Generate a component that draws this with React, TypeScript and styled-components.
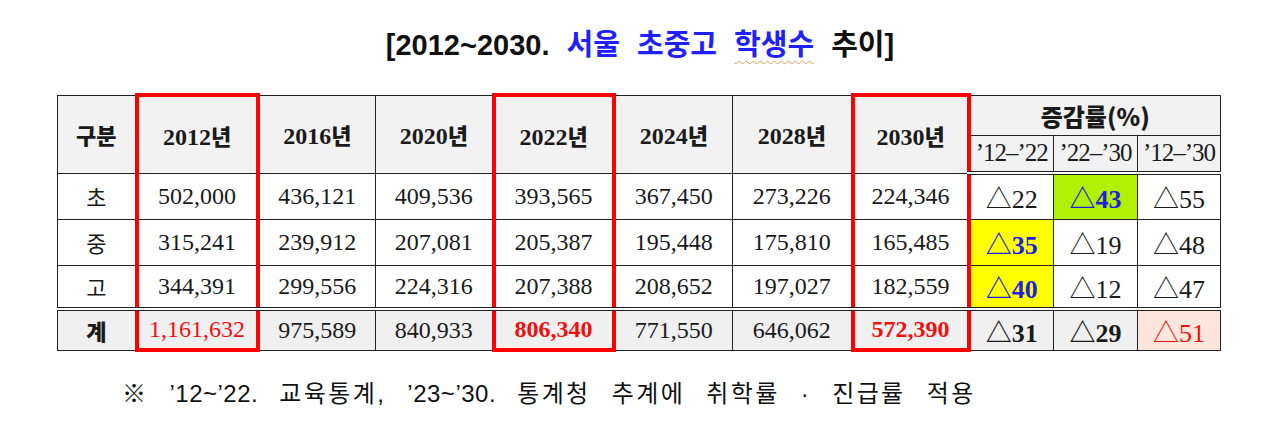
import React from "react";
import styled, { createGlobalStyle, css } from "styled-components";

const Global = createGlobalStyle`
  html, body { margin: 0; padding: 0; background: #fff; }
  body { width: 1280px; height: 433px; overflow: hidden; }
`;

const Page = styled.div`
  width: 1280px;
  display: flex;
  flex-direction: column;
  align-items: flex-start;
`;

const Title = styled.h1`
  margin: 28px 0 0 0;
  align-self: center;
  font: bold 29px/34px "Liberation Sans", "Noto Sans CJK KR", sans-serif;
  color: #111;
  letter-spacing: 0px;
  word-spacing: 9px;
`;

const Blue = styled.span`
  color: #1f1fff;
`;

const Wavy = styled.span`
  text-decoration: underline wavy #e0a050;
  text-decoration-thickness: 1px;
  text-underline-offset: 5px;
`;

const Table = styled.table`
  margin: 31px 0 0 57px;
  width: 1163px;
  border-collapse: collapse;
  table-layout: fixed;
  font-family: "Liberation Serif", "Noto Sans CJK KR", serif;
  color: #1a1a1a;
`;

type CellProps = {
  $bg?: string;
  $red?: boolean;
  $top?: boolean;
  $bottom?: boolean;
  $color?: string;
  $bold?: boolean;
  $size?: number;
};

const Cell = styled.td<CellProps>`
  border: 1.5px solid #222;
  text-align: center;
  padding: 0;
  font-size: ${(p) => p.$size ?? 24}px;
  font-weight: ${(p) => (p.$bold ? "bold" : "normal")};
  color: ${(p) => p.$color ?? "#1a1a1a"};
  background: ${(p) => p.$bg ?? "#fff"};
  white-space: nowrap;
  overflow: hidden;
  ${(p) =>
    p.$red &&
    css`
      border-left: 4px solid #f00;
      border-right: 4px solid #f00;
    `}
  ${(p) =>
    p.$top &&
    css`
      border-top: 4px solid #f00;
    `}
  ${(p) =>
    p.$bottom &&
    css`
      border-bottom: 4px solid #f00;
    `}
`;

const HeadRow = styled.tr<{ $h: number }>`
  height: ${(p) => p.$h}px;
`;

const HeadBottom = styled.tr<{ $h: number }>`
  height: ${(p) => p.$h}px;
  & > td {
    border-bottom: 4px double #222;
  }
`;

const BodyRow = styled.tr<{ $h: number }>`
  height: ${(p) => p.$h}px;
`;

const TotalRow = styled.tr`
  height: 41px;
  & > td {
    border-top: 4px double #222;
  }
`;

const Label = styled.span<{ $bold?: boolean; $size?: number }>`
  font-family: "Noto Sans CJK KR", sans-serif;
  font-weight: ${(p) => (p.$bold ? 900 : 400)};
  font-size: ${(p) => p.$size ?? 22}px;
`;

const Sub = styled.span`
  font-family: "Liberation Serif", "Noto Sans CJK KR", serif;
  font-size: 25px;
  letter-spacing: -1px;
`;

const Note = styled.p`
  margin: 27px 0 0 122px;
  font: 24px/30px "Liberation Sans", "Noto Sans CJK KR", sans-serif;
  color: #111;
  word-spacing: 12px;
  letter-spacing: 2.4px;
`;

const Digits = styled.span`
  letter-spacing: 0.5px;
`;

const HEAD_BG = "#f2f2f2";
const TOTAL_BG = "#f0f0f0";
const DELTA_SIZE = 26;
const years = ["2012", "2016", "2020", "2022", "2024", "2028", "2030"];
const redCols = new Set([0, 3, 6]);
const widths = [79, 121, 118, 118, 120, 119, 120, 116, 85, 84, 83];

type Delta = { v: string; bg?: string; color?: string; bold?: boolean };

const rows: { label: string; nums: string[]; deltas: Delta[] }[] = [
  {
    label: "초",
    nums: ["502,000", "436,121", "409,536", "393,565", "367,450", "273,226", "224,346"],
    deltas: [{ v: "22" }, { v: "43", bg: "#b0f000", color: "#1f1fe0", bold: true }, { v: "55" }],
  },
  {
    label: "중",
    nums: ["315,241", "239,912", "207,081", "205,387", "195,448", "175,810", "165,485"],
    deltas: [{ v: "35", bg: "#ffff00", color: "#1f1fe0", bold: true }, { v: "19" }, { v: "48" }],
  },
  {
    label: "고",
    nums: ["344,391", "299,556", "224,316", "207,388", "208,652", "197,027", "182,559"],
    deltas: [{ v: "40", bg: "#ffff00", color: "#1f1fe0", bold: true }, { v: "12" }, { v: "47" }],
  },
];

const totals = ["1,161,632", "975,589", "840,933", "806,340", "771,550", "646,062", "572,390"];
const totalDeltas: Delta[] = [
  { v: "31", bold: true, bg: TOTAL_BG },
  { v: "29", bold: true, bg: TOTAL_BG },
  { v: "51", bg: "#fde6dc", color: "#f01010" },
];

export default function App() {
  return (
    <>
      <Global />
      <Page>
        <Title>
          [2012~2030. <Blue>서울 초중고 <Wavy>학생수</Wavy></Blue> 추이]
        </Title>
        <Table>
          <colgroup>
            {widths.map((w, i) => (
              <col key={i} style={{ width: w }} />
            ))}
          </colgroup>
          <tbody>
            <HeadRow $h={40}>
              <Cell rowSpan={2} $bg={HEAD_BG}>
                <Label $bold>구분</Label>
              </Cell>
              {years.map((y, i) => (
                <Cell key={y} rowSpan={2} $bg={HEAD_BG} $bold $red={redCols.has(i)} $top={redCols.has(i)}>
                  {y}
                  <Label $bold>년</Label>
                </Cell>
              ))}
              <Cell colSpan={3} $bg={HEAD_BG}>
                <Label $bold $size={24}>증감률(%)</Label>
              </Cell>
            </HeadRow>
            <HeadBottom $h={38}>
              <Cell $bg={HEAD_BG}>
                <Sub>’12–’22</Sub>
              </Cell>
              <Cell $bg={HEAD_BG}>
                <Sub>’22–’30</Sub>
              </Cell>
              <Cell $bg={HEAD_BG}>
                <Sub>’12–’30</Sub>
              </Cell>
            </HeadBottom>
            {rows.map((r, ri) => (
              <BodyRow key={r.label} $h={ri === 2 ? 44 : 46}>
                <Cell>
                  <Label>{r.label}</Label>
                </Cell>
                {r.nums.map((n, i) => (
                  <Cell key={i} $red={redCols.has(i)}>
                    {n}
                  </Cell>
                ))}
                {r.deltas.map((d, i) => (
                  <Cell key={"d" + i} $bg={d.bg} $color={d.color} $bold={d.bold} $size={DELTA_SIZE}>
                    △{d.v}
                  </Cell>
                ))}
              </BodyRow>
            ))}
            <TotalRow>
              <Cell $bg={TOTAL_BG}>
                <Label $bold>계</Label>
              </Cell>
              {totals.map((n, i) => (
                <Cell
                  key={i}
                  $bg={TOTAL_BG}
                  $red={redCols.has(i)}
                  $bottom={redCols.has(i)}
                  $color={redCols.has(i) ? "#f01010" : undefined}
                  $bold={i === 3 || i === 6}
                >
                  {n}
                </Cell>
              ))}
              {totalDeltas.map((d, i) => (
                <Cell key={"t" + i} $bg={d.bg} $color={d.color} $bold={d.bold} $size={DELTA_SIZE}>
                  △{d.v}
                </Cell>
              ))}
            </TotalRow>
          </tbody>
        </Table>
        <Note>
          ※ <Digits>’12~’22.</Digits> 교육통계, <Digits>’23~’30.</Digits> 통계청 추계에 취학률 · 진급률 적용
        </Note>
      </Page>
    </>
  );
}
